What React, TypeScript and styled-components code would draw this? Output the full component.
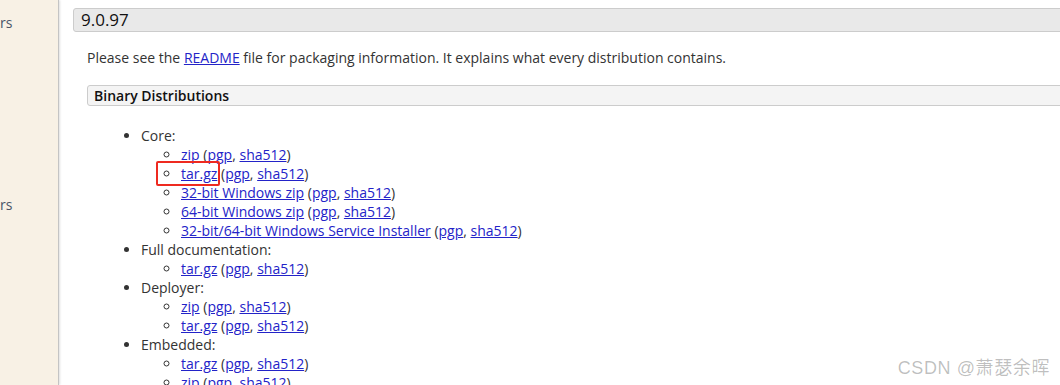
import React from "react";
import styled, { createGlobalStyle } from "styled-components";

const GlobalStyle = createGlobalStyle`
  html, body {
    margin: 0;
    padding: 0;
    background: #ffffff;
  }
  body {
    font-family: "Open Sans", "Noto Sans", sans-serif;
    color: #222;
    overflow: hidden;
  }
`;

type Item = {
  label: string;
  highlight?: boolean;
};

type Group = {
  title: string;
  items: Item[];
};

const groups: Group[] = [
  {
    title: "Core:",
    items: [
      { label: "zip" },
      { label: "tar.gz", highlight: true },
      { label: "32-bit Windows zip" },
      { label: "64-bit Windows zip" },
      { label: "32-bit/64-bit Windows Service Installer" },
    ],
  },
  { title: "Full documentation:", items: [{ label: "tar.gz" }] },
  { title: "Deployer:", items: [{ label: "zip" }, { label: "tar.gz" }] },
  { title: "Embedded:", items: [{ label: "tar.gz" }, { label: "zip" }] },
];

const App = () => {
  return (
    <Page>
      <GlobalStyle />
      <Sidebar>
        <SideLink top={13}>rs</SideLink>
        <SideLink top={195}>rs</SideLink>
      </Sidebar>
      <Main>
        <VersionBar>9.0.97</VersionBar>
        <Body>
          <Para>
            Please see the <Link href="#">README</Link> file for packaging
            information. It explains what every distribution contains.
          </Para>
          <SubBar>Binary Distributions</SubBar>
          <List>
            {groups.map((g) => (
              <li key={g.title}>
                {g.title}
                <SubList>
                  {g.items.map((it, i) => (
                    <li key={i}>
                      {it.highlight ? (
                        <Highlight>
                          <Link href="#">{it.label}</Link>
                        </Highlight>
                      ) : (
                        <Link href="#">{it.label}</Link>
                      )}{" "}
                      (<Link href="#">pgp</Link>, <Link href="#">sha512</Link>)
                    </li>
                  ))}
                </SubList>
              </li>
            ))}
          </List>
        </Body>
      </Main>
      <Watermark>CSDN @萧瑟余晖</Watermark>
    </Page>
  );
};

export default App;

const Page = styled.div`
  position: relative;
  display: flex;
  width: 1060px;
  height: 385px;
  overflow: hidden;
`;

const Sidebar = styled.div`
  position: relative;
  flex: 0 0 58px;
  background: #f8f1e5;
  border-right: 1px solid #c4c4c4;
  box-shadow: 1px 0 2px rgba(0, 0, 0, 0.12);
`;

const SideLink = styled.div<{ top: number }>`
  position: absolute;
  top: ${(p) => p.top}px;
  left: 0;
  font-size: 14px;
  color: #4a5568;
`;

const Main = styled.div`
  flex: 1;
  padding: 8px 0 0 14px;
  min-width: 0;
`;

const VersionBar = styled.div`
  width: 1010px;
  height: 22px;
  line-height: 22px;
  padding-left: 7px;
  background: #e9e9e9;
  border: 1px solid #cccccc;
  border-radius: 3px;
  font-size: 17px;
  color: #111;
`;

const Body = styled.div`
  padding-left: 14px;
`;

const Para = styled.p`
  margin: 16px 0 0;
  font-size: 14px;
  line-height: 19px;
  color: #333;
`;

const Link = styled.a`
  color: #2323c8;
  text-decoration: underline;
`;

const SubBar = styled.div`
  margin-top: 18px;
  width: 1000px;
  height: 19px;
  line-height: 19px;
  padding-left: 6px;
  background: #f4f4f4;
  border: 1px solid #cccccc;
  border-radius: 3px;
  font-size: 14px;
  font-weight: 600;
  color: #111;
`;

const List = styled.ul`
  margin: 20px 0 0;
  padding-left: 54px;
  list-style: disc;
  font-size: 14px;
  line-height: 19px;
  color: #333;
`;

const SubList = styled.ul`
  margin: 0;
  padding-left: 40px;
  list-style: circle;
`;

const Highlight = styled.span`
  position: relative;
  &::after {
    content: "";
    position: absolute;
    left: -25px;
    right: -3px;
    top: -3px;
    bottom: -3px;
    border: 2px solid #ee2a20;
    border-radius: 2px;
    pointer-events: none;
  }
`;

const Watermark = styled.div`
  position: absolute;
  right: 10px;
  bottom: 6px;
  font-family: "Liberation Sans", "Noto Sans CJK SC", sans-serif;
  font-size: 18px;
  color: rgba(0, 0, 0, 0.26);
  letter-spacing: 0.6px;
`;
